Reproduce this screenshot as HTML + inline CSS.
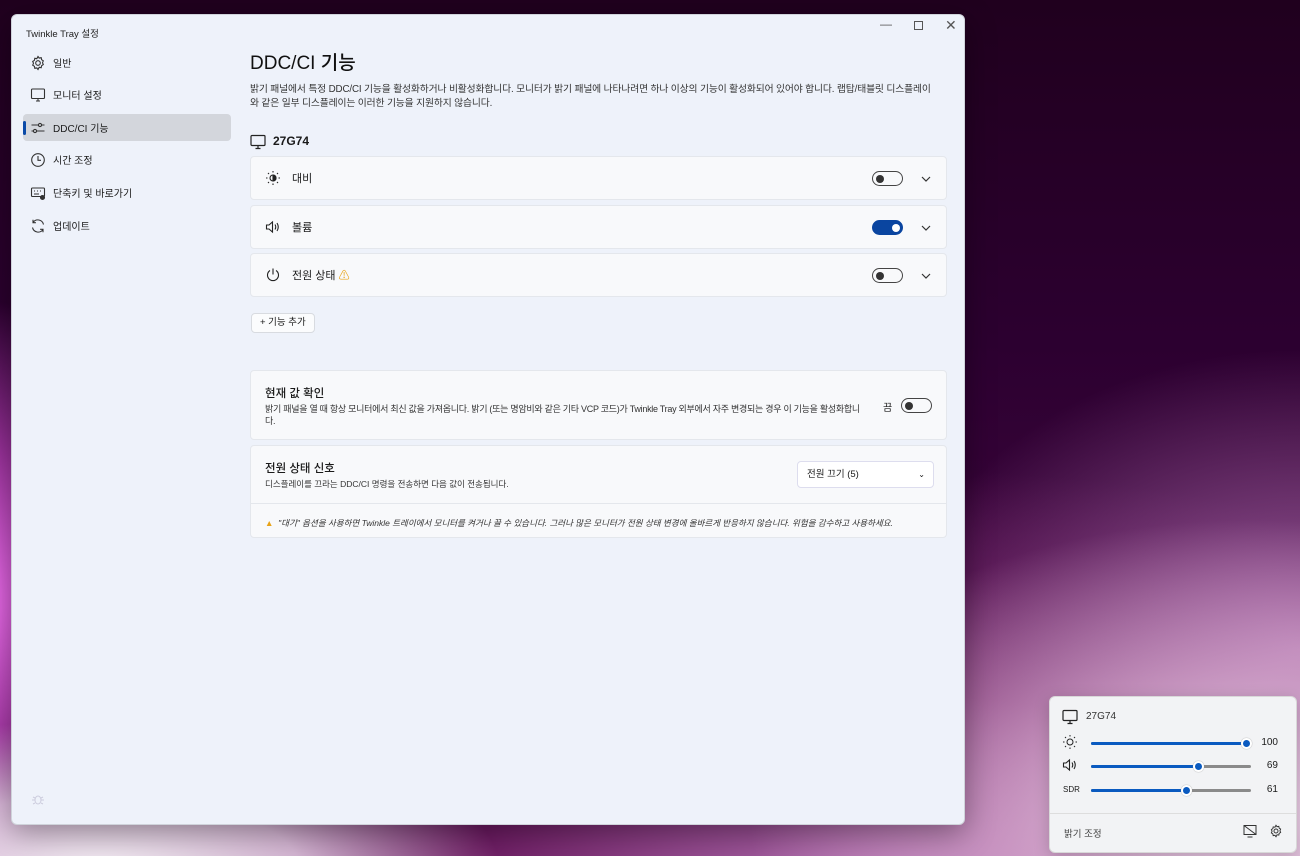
<!DOCTYPE html>
<html><head><meta charset="utf-8"><style>
*{box-sizing:border-box;margin:0;padding:0}
body{width:1300px;height:856px;overflow:hidden;position:relative;font-family:"Liberation Sans","Noto Sans CJK KR",sans-serif;color:#1a1a1a;
background:
radial-gradient(ellipse 400px 150px at 100px 870px,#f4eef4 0%,rgba(240,220,240,0.8) 50%,rgba(0,0,0,0) 100%),
radial-gradient(ellipse 500px 300px at 1250px 820px,#f0d8ec 0%,rgba(230,190,220,0.6) 50%,rgba(0,0,0,0) 100%),
radial-gradient(ellipse 200px 300px at -20px 600px,#f070f0 0%,rgba(220,80,220,0.6) 50%,rgba(0,0,0,0) 100%),
radial-gradient(ellipse 400px 300px at 1300px 650px,#a060a0 0%,rgba(0,0,0,0) 100%),
radial-gradient(ellipse 900px 450px at 900px 920px,#c080c0 0%,#6a1a60 50%,rgba(0,0,0,0) 100%),
linear-gradient(180deg,#20001e 0%,#2c0030 40%,#4a0a48 100%);}
.win{position:absolute;left:11px;top:14px;width:954px;height:811px;background:#eef2fa;border-radius:6px;box-shadow:0 8px 30px rgba(0,0,0,.35);border:1px solid #cfd3da}
.title{position:absolute;left:14px;top:11px;font-size:9.5px;color:#222}
.ctl{position:absolute;top:6px;font-size:12px;color:#555}
.nav{position:absolute;left:11px;width:208px;height:27px;border-radius:4px;font-size:10px;display:flex;align-items:center}
.nav svg{position:absolute;left:7px}
.nav span{position:absolute;left:30px}
.nav.sel{background:#d3d6dc}
.nav.sel:before{content:"";position:absolute;left:0;top:7px;width:3px;height:14px;background:#0a4aa8;border-radius:2px}
h1{position:absolute;left:238px;top:33px;font-size:19px;font-weight:500;color:#111}
.desc{position:absolute;left:238px;top:68px;white-space:nowrap;font-size:9.8px;letter-spacing:-0.15px;line-height:14px;color:#333}
.card{position:absolute;left:238px;width:697px;background:#f8f9fb;border:1px solid #e4e7ec;border-radius:4px}
.row{height:44px}
.row .lbl{position:absolute;left:41px;top:13px;font-size:11px}
.row svg.ic{position:absolute;left:14px;top:13px}
.tg{position:absolute;width:31px;height:15px;border:1.3px solid #444;border-radius:8px}
.tg:after{content:"";position:absolute;left:3px;top:2.5px;width:8px;height:8px;border-radius:50%;background:#333}
.tg.on{background:#0a45a0;border-color:#0a45a0}
.tg.on:after{left:19px;background:#fff}
.chev{position:absolute;right:14px;top:16px}
.btn{position:absolute;left:239px;top:298px;height:20px;padding:0 8px;background:#fbfcfd;border:1px solid #d8dbe0;border-radius:4px;font-size:9.5px;line-height:18px}
.pop{position:absolute;left:1049px;top:696px;width:248px;height:157px;background:#f2f3f5;border-radius:6px;border:1px solid #d8d8d8;box-shadow:0 4px 16px rgba(0,0,0,.2)}
.sl{position:absolute;left:41px;height:3px;background:#8a8a8a;width:160px;border-radius:2px}
.sl i{position:absolute;left:0;top:0;height:3px;background:#0a5ac0;border-radius:2px}
.sl b{position:absolute;top:-4px;width:11px;height:11px;border-radius:50%;background:#0a5ac0;border:2px solid #fff;box-shadow:0 0 1px #888}
.val{position:absolute;right:18px;font-size:10px}
</style></head><body>
<div class="win">
<div class="title">Twinkle Tray 설정</div>
<div class="ctl" style="left:868px;top:2px">—</div>
<div class="ctl" style="left:902px;top:6px;width:9px;height:9px;border:1px solid #555;"></div>
<div class="ctl" style="left:933px;top:2px;font-size:14px">✕</div>

<div class="nav" style="top:34px"><svg width="16" height="16" viewBox="0 0 16 16" fill="none" stroke="#333" stroke-width="1.1"><circle cx="8" cy="8" r="2.3"/><path d="M8 1.5l1.2 1.6 2-.4.4 2 1.7 1.1-.8 1.9.8 1.9-1.7 1.1-.4 2-2-.4L8 14.5l-1.2-1.6-2 .4-.4-2-1.7-1.1.8-1.9-.8-1.9 1.7-1.1.4-2 2 .4z"/></svg><span>일반</span></div>
<div class="nav" style="top:66px"><svg width="16" height="16" viewBox="0 0 16 16" fill="none" stroke="#333" stroke-width="1.1"><rect x="1.5" y="2" width="13" height="9.5" rx="1"/><path d="M6 14h4M8 11.5V14"/></svg><span>모니터 설정</span></div>
<div class="nav sel" style="top:99px"><svg width="16" height="16" viewBox="0 0 16 16" fill="none" stroke="#333" stroke-width="1.1"><path d="M1.5 5h13M1.5 11h13"/><circle cx="10" cy="5" r="1.6" fill="#d3d6dc"/><circle cx="5" cy="11" r="1.6" fill="#d3d6dc"/></svg><span>DDC/CI 기능</span></div>
<div class="nav" style="top:131px"><svg width="16" height="16" viewBox="0 0 16 16" fill="none" stroke="#333" stroke-width="1.1"><circle cx="8" cy="8" r="6.3"/><path d="M8 4v4.3h3"/></svg><span>시간 조정</span></div>
<div class="nav" style="top:164px"><svg width="16" height="16" viewBox="0 0 16 16" fill="none" stroke="#333" stroke-width="1.1"><rect x="1.5" y="3" width="13" height="8.5" rx="1"/><path d="M4 6h1M7 6h1M10 6h1M4 9h5"/><circle cx="12.5" cy="12.5" r="2" fill="#333"/></svg><span>단축키 및 바로가기</span></div>
<div class="nav" style="top:197px"><svg width="16" height="16" viewBox="0 0 16 16" fill="none" stroke="#333" stroke-width="1.1"><path d="M13.5 6.5A5.8 5.8 0 0 0 3 4.5M2.5 9.5A5.8 5.8 0 0 0 13 11.5M3 1.8v2.9h2.9M13 14.2v-2.9h-2.9"/></svg><span>업데이트</span></div>
<svg style="position:absolute;left:19px;top:777px" width="14" height="14" viewBox="0 0 14 14" fill="none" stroke="#ccd" stroke-width="1"><ellipse cx="7" cy="8" rx="3" ry="4"/><path d="M2 5l2 1M12 5l-2 1M1 8h3M13 8h-3M2 12l2-1M12 12l-2-1"/></svg>

<h1>DDC/CI 기능</h1>
<div class="desc">밝기 패널에서 특정 DDC/CI 기능을 활성화하거나 비활성화합니다. 모니터가 밝기 패널에 나타나려면 하나 이상의 기능이 활성화되어 있어야 합니다. 랩탑/태블릿 디스플레이<br>와 같은 일부 디스플레이는 이러한 기능을 지원하지 않습니다.</div>
<svg style="position:absolute;left:238px;top:119px" width="16" height="16" viewBox="0 0 16 16" fill="none" stroke="#222" stroke-width="1.2"><rect x="1" y="1.5" width="14" height="10" rx="1"/><path d="M5.5 14.5h5M8 11.5v3"/></svg>
<div style="position:absolute;left:261px;top:119px;font-size:12px;font-weight:bold">27G74</div>

<div class="card row" style="top:141px"><svg class="ic" width="16" height="16" viewBox="0 0 16 16" fill="none" stroke="#222" stroke-width="1.1"><circle cx="8" cy="8" r="3"/><path d="M8 5v6A3 3 0 0 0 8 5z" fill="#222"/><path d="M8 1v1.5M8 13.5V15M1 8h1.5M13.5 8H15M3 3l1 1M12 12l1 1M13 3l-1 1M3 13l1-1"/></svg><div class="lbl">대비</div><div class="tg" style="left:621px;top:14px"></div><svg class="chev" width="12" height="12" viewBox="0 0 12 12" fill="none" stroke="#333" stroke-width="1.2"><path d="M2 4l4 4 4-4"/></svg></div>
<div class="card row" style="top:190px"><svg class="ic" width="16" height="16" viewBox="0 0 16 16" fill="none" stroke="#222" stroke-width="1.1"><path d="M1.5 6h2.5l3.5-3v10L4 10H1.5z"/><path d="M10 5.5q1.5 2.5 0 5M12 4q2.5 4 0 8"/></svg><div class="lbl">볼륨</div><div class="tg on" style="left:621px;top:14px"></div><svg class="chev" width="12" height="12" viewBox="0 0 12 12" fill="none" stroke="#333" stroke-width="1.2"><path d="M2 4l4 4 4-4"/></svg></div>
<div class="card row" style="top:238px"><svg class="ic" width="16" height="16" viewBox="0 0 16 16" fill="none" stroke="#222" stroke-width="1.1"><path d="M5 3.5a5.5 5.5 0 1 0 6 0M8 1.5v6"/></svg><div class="lbl">전원 상태 <span style="color:#e8a317;font-size:11px">⚠</span></div><div class="tg" style="left:621px;top:14px"></div><svg class="chev" width="12" height="12" viewBox="0 0 12 12" fill="none" stroke="#333" stroke-width="1.2"><path d="M2 4l4 4 4-4"/></svg></div>

<div class="btn">+ 기능 추가</div>

<div class="card" style="top:355px;height:70px"><div style="position:absolute;left:14px;top:14px;font-size:11.5px;font-weight:500">현재 값 확인</div><div style="position:absolute;left:14px;top:32px;white-space:nowrap;font-size:9px;letter-spacing:-0.28px;line-height:12px;color:#333">밝기 패널을 열 때 항상 모니터에서 최신 값을 가져옵니다. 밝기 (또는 명암비와 같은 기타 VCP 코드)가 Twinkle Tray 외부에서 자주 변경되는 경우 이 기능을 활성화합니<br>다.</div><div style="position:absolute;left:632px;top:28px;font-size:10px">끔</div><div class="tg" style="left:650px;top:27px"></div></div>

<div class="card" style="top:430px;height:93px"><div style="position:absolute;left:14px;top:14px;font-size:11.5px;font-weight:500">전원 상태 신호</div><div style="position:absolute;left:14px;top:32px;font-size:8.5px;color:#333">디스플레이를 끄라는 DDC/CI 명령을 전송하면 다음 값이 전송됩니다.</div>
<div style="position:absolute;left:546px;top:15px;width:137px;height:27px;background:#fff;border:1px solid #dde;border-radius:4px;font-size:9.5px;line-height:25px;padding-left:9px">전원 끄기 (5)<span style="position:absolute;right:8px;font-size:8px">⌄</span></div>
<div style="position:absolute;left:0;top:57px;width:100%;border-top:1px solid #e4e7ec"></div>
<div style="position:absolute;left:14px;top:71px;font-size:8.5px;color:#333;font-style:italic"><span style="color:#e8a317;font-style:normal">▲</span>&nbsp; "대기" 옵션을 사용하면 Twinkle 트레이에서 모니터를 켜거나 끌 수 있습니다. 그러나 많은 모니터가 전원 상태 변경에 올바르게 반응하지 않습니다. 위험을 감수하고 사용하세요.</div></div>
</div>

<div class="pop">
<svg style="position:absolute;left:12px;top:12px" width="16" height="16" viewBox="0 0 16 16" fill="none" stroke="#222" stroke-width="1.2"><rect x="1" y="1.5" width="14" height="10" rx="1"/><path d="M5.5 14.5h5M8 11.5v3"/></svg>
<div style="position:absolute;left:36px;top:14px;font-size:10px;color:#333">27G74</div>
<svg style="position:absolute;left:12px;top:37px" width="16" height="16" viewBox="0 0 16 16" fill="none" stroke="#222" stroke-width="1"><circle cx="8" cy="8" r="3"/><path d="M8 1v1.5M8 13.5V15M1 8h1.5M13.5 8H15M3 3l1 1M12 12l1 1M13 3l-1 1M3 13l1-1"/></svg>
<div class="sl" style="top:45px"><i style="width:155px"></i><b style="left:150px"></b></div><div class="val" style="top:40px">100</div>
<svg style="position:absolute;left:12px;top:60px" width="16" height="16" viewBox="0 0 16 16" fill="none" stroke="#222" stroke-width="1.1"><path d="M1.5 6h2.5l3.5-3v10L4 10H1.5z"/><path d="M10 5.5q1.5 2.5 0 5M12 4q2.5 4 0 8"/></svg>
<div class="sl" style="top:68px"><i style="width:108px"></i><b style="left:102px"></b></div><div class="val" style="top:63px">69</div>
<div style="position:absolute;left:13px;top:88px;font-size:8px">SDR</div>
<div class="sl" style="top:92px"><i style="width:96px"></i><b style="left:90px"></b></div><div class="val" style="top:87px">61</div>
<div style="position:absolute;left:0;top:116px;width:100%;border-top:1px solid #ddd"></div>
<div style="position:absolute;left:14px;top:129px;font-size:9.5px;color:#444">밝기 조정</div>
<svg style="position:absolute;left:193px;top:127px" width="14" height="14" viewBox="0 0 14 14" fill="none" stroke="#333" stroke-width="1"><rect x="1" y="1.5" width="12" height="9"/><path d="M4.5 13h5M1 1.5l12 9"/></svg>
<svg style="position:absolute;left:219px;top:127px" width="14" height="14" viewBox="0 0 16 16" fill="none" stroke="#333" stroke-width="1.1"><circle cx="8" cy="8" r="2.3"/><path d="M8 1.5l1.2 1.6 2-.4.4 2 1.7 1.1-.8 1.9.8 1.9-1.7 1.1-.4 2-2-.4L8 14.5l-1.2-1.6-2 .4-.4-2-1.7-1.1.8-1.9-.8-1.9 1.7-1.1.4-2 2 .4z"/></svg>
</div>
</body></html>
